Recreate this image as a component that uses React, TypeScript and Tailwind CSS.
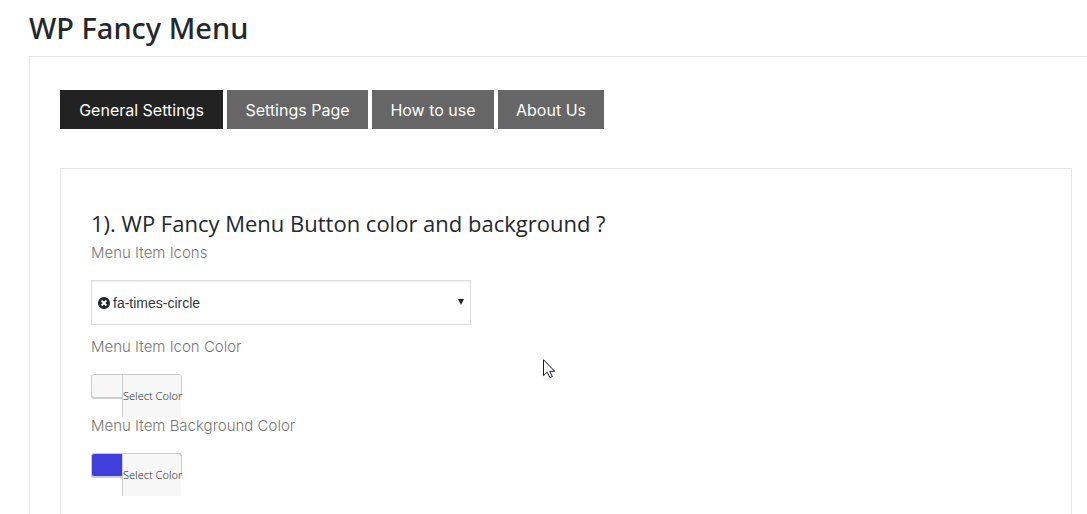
import { useState } from "react";

const tabs = [
  { label: "General Settings", width: "min-w-[163px]" },
  { label: "Settings Page", width: "min-w-[141px]" },
  { label: "How to use", width: "min-w-[122px]" },
  { label: "About Us", width: "min-w-[106px]" },
];

function ColorField({ id, label, swatch }: { id: string; label: string; swatch: string }) {
  return (
    <div>
      <p id={id} className="text-[15px] leading-6 font-light text-[#777777]">
        {label}
      </p>
      <button
        type="button"
        aria-describedby={id}
        className={`mt-[15px] mb-4 flex h-6 w-[91px] items-start rounded-[3px] border border-[#cccccc] pl-[30px] shadow-[0_1px_0_#cccccc] ${swatch}`}
      >
        <span className="block h-[42px] w-full shrink-0 rounded-r-[2px] border-l border-[#cccccc] bg-[#f7f7f7] text-center font-['Noto_Sans',sans-serif] text-[11px] leading-[42px] font-light whitespace-nowrap text-[#333333]">
          Select Color
        </span>
      </button>
    </div>
  );
}

export default function App() {
  const [active, setActive] = useState("General Settings");

  return (
    <main className="flex min-h-screen flex-col bg-white pl-[29px] font-['Inter',sans-serif] text-[#23282d]">
      <h1 className="pt-2 pb-2 font-['Noto_Sans',sans-serif] text-[29px] leading-10 font-medium">WP Fancy Menu</h1>
      <section className="flex grow flex-col border-t border-l border-[#e5e5e5] pt-[33px] pr-[15px] pl-[30px]">
        <nav className="flex gap-1">
          {tabs.map((tab) => (
            <button
              key={tab.label}
              type="button"
              onClick={() => setActive(tab.label)}
              className={`h-[39px] text-base text-white ${tab.width} ${
                active === tab.label ? "bg-[#222222]" : "bg-[#666666]"
              }`}
            >
              {tab.label}
            </button>
          ))}
        </nav>

        <div className="mt-[39px] grow border border-b-0 border-[#e5e5e5] px-[30px] pt-[38px]">
          <h2 className="mb-0.5 font-['Open_Sans',sans-serif] text-[22px] leading-8">
            1). WP Fancy Menu Button color and background ?
          </h2>
          <label htmlFor="menu-icon" className="block text-[15px] leading-6 font-light text-[#777777]">
            Menu Item Icons
          </label>
          <div className="relative mt-[15px] mb-[10px] w-[380px] max-w-full">
            <svg
              viewBox="0 0 1536 1536"
              className="pointer-events-none absolute top-[17px] left-[7px] size-3 fill-[#23282d]"
              aria-hidden="true"
            >
              <path d="M1149 994q0-26-19-45L949 768l181-181q19-19 19-45 0-27-19-46l-90-90q-19-19-46-19-26 0-45 19L768 587 587 406q-19-19-45-19-27 0-46 19l-90 90q-19 19-19 46 0 26 19 45l181 181-181 181q-19 19-19 45 0 27 19 46l90 90q19 19 46 19 26 0 45-19l181-181 181 181q19 19 45 19 27 0 46-19l90-90q19-19 19-46zm387-226q0 209-103 385.500T1153.500 1433 768 1536t-385.500-103T103 1153.500 0 768t103-385.500T382.500 103 768 0t385.500 103T1433 382.500 1536 768z" />
            </svg>
            <select
              id="menu-icon"
              className="h-[45px] w-full appearance-none border border-[#dddddd] bg-white pl-[21px] font-['Liberation_Sans',sans-serif] text-sm text-[#32373c] shadow-[inset_0_1px_2px_rgba(0,0,0,0.07)]"
            >
              <option>fa-times-circle</option>
            </select>
            <svg
              viewBox="0 0 6 6"
              className="pointer-events-none absolute top-[19px] right-[7px] size-[6px] fill-[#23282d]"
              aria-hidden="true"
            >
              <path d="M0 0h6L3 6z" />
            </svg>
          </div>
          <ColorField id="icon-color" label="Menu Item Icon Color" swatch="bg-[#f7f7f7]" />
          <ColorField id="background-color" label="Menu Item Background Color" swatch="bg-[#413fdc]" />
        </div>
      </section>

      <svg
        viewBox="0 0 13 21"
        className="pointer-events-none absolute top-[359px] left-[543px] h-[21px] w-[13px]"
        aria-hidden="true"
      >
        <path
          d="M.5.700v16l3.700-3.500 2.700 5.500 2.500-1.100-2.700-5.300h5z"
          fill="white"
          stroke="#16162c"
          strokeWidth="1"
        />
      </svg>
    </main>
  );
}
